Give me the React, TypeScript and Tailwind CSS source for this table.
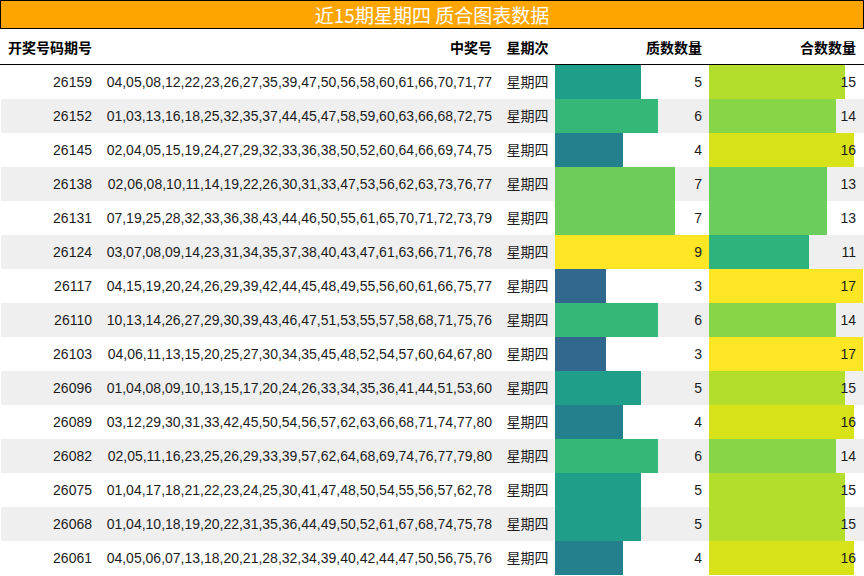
import React from "react";

type Row = { id: string; nums: string; p: number; c: number };

const rows: Row[] = [
  { id: "26159", nums: "04,05,08,12,22,23,26,27,35,39,47,50,56,58,60,61,66,70,71,77", p: 5, c: 15 },
  { id: "26152", nums: "01,03,13,16,18,25,32,35,37,44,45,47,58,59,60,63,66,68,72,75", p: 6, c: 14 },
  { id: "26145", nums: "02,04,05,15,19,24,27,29,32,33,36,38,50,52,60,64,66,69,74,75", p: 4, c: 16 },
  { id: "26138", nums: "02,06,08,10,11,14,19,22,26,30,31,33,47,53,56,62,63,73,76,77", p: 7, c: 13 },
  { id: "26131", nums: "07,19,25,28,32,33,36,38,43,44,46,50,55,61,65,70,71,72,73,79", p: 7, c: 13 },
  { id: "26124", nums: "03,07,08,09,14,23,31,34,35,37,38,40,43,47,61,63,66,71,76,78", p: 9, c: 11 },
  { id: "26117", nums: "04,15,19,20,24,26,29,39,42,44,45,48,49,55,56,60,61,66,75,77", p: 3, c: 17 },
  { id: "26110", nums: "10,13,14,26,27,29,30,39,43,46,47,51,53,55,57,58,68,71,75,76", p: 6, c: 14 },
  { id: "26103", nums: "04,06,11,13,15,20,25,27,30,34,35,45,48,52,54,57,60,64,67,80", p: 3, c: 17 },
  { id: "26096", nums: "01,04,08,09,10,13,15,17,20,24,26,33,34,35,36,41,44,51,53,60", p: 5, c: 15 },
  { id: "26089", nums: "03,12,29,30,31,33,42,45,50,54,56,57,62,63,66,68,71,74,77,80", p: 4, c: 16 },
  { id: "26082", nums: "02,05,11,16,23,25,26,29,33,39,57,62,64,68,69,74,76,77,79,80", p: 6, c: 14 },
  { id: "26075", nums: "01,04,17,18,21,22,23,24,25,30,41,47,48,50,54,55,56,57,62,78", p: 5, c: 15 },
  { id: "26068", nums: "01,04,10,18,19,20,22,31,35,36,44,49,50,52,61,67,68,74,75,78", p: 5, c: 15 },
  { id: "26061", nums: "04,05,06,07,13,18,20,21,28,32,34,39,40,42,44,47,50,56,75,76", p: 4, c: 16 },
];

const pColor: Record<number, string> = {
  3: "#32688d",
  4: "#25808d",
  5: "#1f9e89",
  6: "#35b779",
  7: "#6ccd5a",
  9: "#fde725",
};
const cColor: Record<number, string> = {
  11: "#2eb37c",
  13: "#6bcd5b",
  14: "#88d548",
  15: "#b4de2c",
  16: "#d8e219",
  17: "#fde725",
};

const font = { fontFamily: '"Liberation Sans", "Noto Sans CJK SC", sans-serif' };

function BarCell({ value, max, color, padClass }: { value: number; max: number; color: string; padClass: string }) {
  return (
    <div className={`relative h-full flex items-center justify-end ${padClass}`}>
      <div
        className="absolute left-0 top-0 bottom-0"
        style={{ width: Math.round((154 * value) / max), backgroundColor: color }}
      />
      <span className="relative">{value}</span>
    </div>
  );
}

export default function App() {
  return (
    <div className="w-[864px] h-[576px] bg-white text-[14px] text-[#1c1c1c] overflow-hidden" style={font}>
      <div className="h-[29px] border border-black bg-[#ffa500] flex items-center justify-center">
        <span
          className="text-white text-[19px] leading-none"
          style={{ fontFamily: '"Noto Sans CJK SC", "Liberation Sans", sans-serif' }}
        >
          近15期星期四 质合图表数据
        </span>
      </div>
      <div className="h-[36px] pt-[3px] border-b border-black grid grid-cols-[100px_400px_55px_154px_155px] items-center font-bold text-black">
        <div className="pl-2">开奖号码期号</div>
        <div className="text-right pr-2">中奖号</div>
        <div className="text-center">星期次</div>
        <div className="text-right pr-[7px]">质数数量</div>
        <div className="text-right pr-2">合数数量</div>
      </div>
      <div className="border-l border-white">
        {rows.map((r, i) => (
          <div
            key={r.id}
            className={`h-[34px] grid grid-cols-[99px_400px_55px_154px_155px] items-center ${i % 2 === 1 ? "bg-[#efefef]" : "bg-white"}`}
          >
            <div className="text-right pr-2">{r.id}</div>
            <div className="text-right pr-2 whitespace-nowrap">{r.nums}</div>
            <div className="text-center">星期四</div>
            <BarCell value={r.p} max={9} color={pColor[r.p]} padClass="pr-[7px]" />
            <BarCell value={r.c} max={17} color={cColor[r.c]} padClass="pr-2" />
          </div>
        ))}
      </div>
    </div>
  );
}
